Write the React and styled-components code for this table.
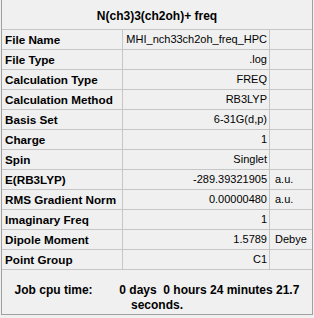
import React from "react";
import styled, { createGlobalStyle } from "styled-components";

const GlobalStyle = createGlobalStyle`
  html, body {
    margin: 0;
    padding: 0;
    background: #f0f0f0;
  }
  body {
    font-family: "Liberation Sans", Arial, sans-serif;
    color: #000;
  }
`;

const Page = styled.div`
  width: 314px;
  height: 318px;
  box-sizing: border-box;
  padding-left: 1px;
  background: #f0f0f0;
`;

const Panel = styled.div`
  width: 312px;
  box-sizing: border-box;
  border-left: 1px solid #a0a0a0;
  border-right: 1px solid #a0a0a0;
  border-bottom: 1px solid #a0a0a0;
  display: flex;
  flex-direction: column;
`;

const Title = styled.div`
  height: 29px;
  box-sizing: border-box;
  padding-top: 4px;
  line-height: 25px;
  text-align: center;
  font-size: 12px;
  font-weight: bold;
`;

const Row = styled.div`
  display: grid;
  grid-template-columns: 121px 147px 1fr;
  border-top: 1px solid #c6c6c6;
  height: 20px;
  box-sizing: border-box;
  line-height: 19px;
  white-space: nowrap;
`;

const Label = styled.div`
  border-right: 1px solid #c6c6c6;
  padding-left: 3px;
  font-size: 11.7px;
  font-weight: bold;
  overflow: hidden;
`;

const Value = styled.div`
  border-right: 1px solid #c6c6c6;
  padding-right: 2px;
  text-align: right;
  font-size: 11px;
  overflow: hidden;
`;

const Unit = styled.div`
  padding-left: 5px;
  font-size: 11px;
`;

const JobTime = styled.div`
  border-top: 1px solid #c6c6c6;
  padding: 13px 0 1px;
  font-size: 12px;
  font-weight: bold;
  line-height: 15px;
  text-align: center;
  white-space: pre-wrap;
`;

const rows = [
  ["File Name", "MHI_nch33ch2oh_freq_HPC", ""],
  ["File Type", ".log", ""],
  ["Calculation Type", "FREQ", ""],
  ["Calculation Method", "RB3LYP", ""],
  ["Basis Set", "6-31G(d,p)", ""],
  ["Charge", "1", ""],
  ["Spin", "Singlet", ""],
  ["E(RB3LYP)", "-289.39321905", "a.u."],
  ["RMS Gradient Norm", "0.00000480", "a.u."],
  ["Imaginary Freq", "1", ""],
  ["Dipole Moment", "1.5789", "Debye"],
  ["Point Group", "C1", ""],
];

export default function App() {
  return (
    <>
      <GlobalStyle />
      <Page>
        <Panel>
          <Title>N(ch3)3(ch2oh)+ freq</Title>
          {rows.map(([label, value, unit]) => (
            <Row key={label}>
              <Label>{label}</Label>
              <Value>{value}</Value>
              <Unit>{unit}</Unit>
            </Row>
          ))}
          <JobTime>
            {"Job cpu time:        0 days  0 hours 24 minutes 21.7 seconds."}
          </JobTime>
        </Panel>
      </Page>
    </>
  );
}
